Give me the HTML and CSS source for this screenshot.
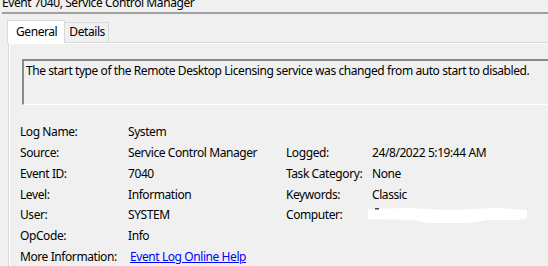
FILE: index.html
```html
<!DOCTYPE html>
<html>
<head>
<meta charset="utf-8">
<link rel="stylesheet" href="styles.css">
</head>
<body>
<div class="title">Event 7040, Service Control Manager</div>
<div class="rule"></div>
<div class="tabs">
  <div class="tab active">General</div>
  <div class="tab">Details</div>
</div>
<div class="panel">
  <div class="message">The start type of the Remote Desktop Licensing service was changed from auto start to disabled.</div>
  <div class="fields">
    <div class="lbl">Log Name:</div><div class="val">System</div><div></div><div></div>
    <div class="lbl">Source:</div><div class="val">Service Control Manager</div><div class="lbl">Logged:</div><div class="val">24/8/2022 5:19:44 AM</div>
    <div class="lbl">Event ID:</div><div class="val">7040</div><div class="lbl">Task Category:</div><div class="val">None</div>
    <div class="lbl">Level:</div><div class="val">Information</div><div class="lbl">Keywords:</div><div class="val">Classic</div>
    <div class="lbl">User:</div><div class="val">SYSTEM</div><div class="lbl">Computer:</div><div class="val"><svg class="redact" width="162" height="20" viewBox="0 0 162 20"><polygon points="0,4 40,3 80,5 130,3 159,5 159,13 150,15 120,15 100,18 60,18 45,15 0,14" fill="#ffffff"/><rect x="7" y="3" width="4" height="1.5" fill="#444"/></svg></div>
    <div class="lbl">OpCode:</div><div class="val">Info</div><div></div><div></div>
    <div class="lbl">More Information:</div><div class="val"><a class="link" href="#">Event Log Online Help</a></div><div></div><div></div>
  </div>
</div>
</body>
</html>
```
FILE: styles.css
```css
html, body {
  margin: 0;
  padding: 0;
  overflow: hidden;
}
body {
  width: 548px;
  height: 266px;
  background: #f0f0f0;
  font-family: "Noto Sans", "Open Sans", sans-serif;
  font-size: 12px;
  letter-spacing: -0.42px;
  color: #000;
}
.title {
  margin: -7px 0 0 2px;
  height: 19px;
  line-height: 20px;
  white-space: nowrap;
}
.rule {
  margin-left: 2px;
  height: 2px;
  background: #a0a0a0;
}
.tabs {
  display: flex;
  align-items: flex-end;
  margin: 6px 0 0 7px;
  height: 22px;
}
.tab {
  box-sizing: border-box;
  height: 20px;
  line-height: 18px;
  padding: 0 3px 0 4px;
  border: 1px solid #d9d9d9;
  border-bottom: none;
  border-left: none;
  background: #f0f0f0;
}
.tab.active {
  height: 23px;
  line-height: 22px;
  padding: 0 7px 0 8px;
  border-left: 1px solid #d9d9d9;
  background: #ffffff;
  position: relative;
  margin-bottom: -1px;
}
.panel {
  margin-left: 8px;
  border-top: 1px solid #d9d9d9;
  border-left: 1px solid #d9d9d9;
  box-shadow: inset 1px 1px 0 #ffffff;
  height: 240px;
  padding: 16px 0 0 13px;
}
.message {
  box-sizing: border-box;
  width: 560px;
  height: 46px;
  border-top: 2px solid #8a8a8a;
  border-left: 2px solid #8a8a8a;
  border-bottom: 1px solid #ffffff;
  padding: 2px 0 0 2px;
  line-height: 16px;
  white-space: nowrap;
}
.fields {
  display: grid;
  grid-template-columns: 108px 158px 86px auto;
  grid-auto-rows: 20.85px;
  margin: 16px 0 0 -2px;
  line-height: 21px;
  white-space: nowrap;
}
.redact {
  display: block;
  margin: 1px 0 0 -4px;
}
.link {
  color: #0000ff;
  text-decoration: underline;
  margin-left: 2px;
}
```
